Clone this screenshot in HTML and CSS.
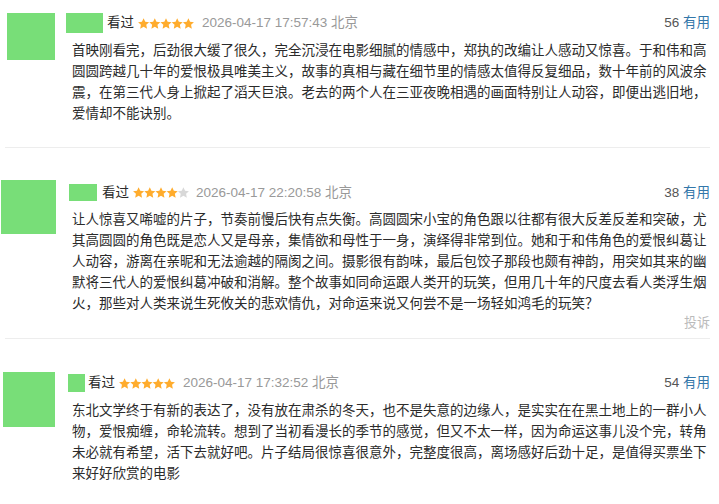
FILE: index.html
```html
<!DOCTYPE html>
<html lang="zh-CN">
<head>
<meta charset="utf-8">
<title>短评</title>
<link rel="stylesheet" href="styles.css">
</head>
<body>
<svg class="defs" width="0" height="0" aria-hidden="true">
  <defs>
    <polygon id="star" points="5.6,0.2 7.25,3.73 11.12,4.21 8.26,6.87 9.01,10.69 5.6,8.8 2.19,10.69 2.94,6.87 0.08,4.21 3.95,3.73"/>
  </defs>
</svg>
<div class="list">
  <div class="card card-a">
    <div class="avatar"></div>
    <div class="body">
      <div class="head">
        <span class="name"></span>
        <span class="watched">看过</span>
        <svg class="stars" width="56" height="11" viewBox="0 0 56 11">
          <use href="#star" x="0" class="on"/><use href="#star" x="11.2" class="on"/><use href="#star" x="22.4" class="on"/><use href="#star" x="33.6" class="on"/><use href="#star" x="44.8" class="on"/>
        </svg>
        <span class="time">2026-04-17 17:57:43 北京</span>
        <span class="votes"><span class="num">56</span> <span class="useful">有用</span></span>
      </div>
      <p class="text">首映刚看完，后劲很大缓了很久，完全沉浸在电影细腻的情感中，郑执的改编让人感动又惊喜。于和伟和高圆圆跨越几十年的爱恨极具唯美主义，故事的真相与藏在细节里的情感太值得反复细品，数十年前的风波余震，在第三代人身上掀起了滔天巨浪。老去的两个人在三亚夜晚相遇的画面特别让人动容，即便出逃旧地，爱情却不能诀别。</p>
    </div>
  </div>
  <div class="card card-b">
    <div class="avatar"></div>
    <div class="body">
      <div class="head">
        <span class="name"></span>
        <span class="watched">看过</span>
        <svg class="stars" width="56" height="11" viewBox="0 0 56 11">
          <use href="#star" x="0" class="on"/><use href="#star" x="11.2" class="on"/><use href="#star" x="22.4" class="on"/><use href="#star" x="33.6" class="on"/><use href="#star" x="44.8" class="off"/>
        </svg>
        <span class="time">2026-04-17 22:20:58 北京</span>
        <span class="votes"><span class="num">38</span> <span class="useful">有用</span></span>
      </div>
      <p class="text">让人惊喜又唏嘘的片子，节奏前慢后快有点失衡。高圆圆宋小宝的角色跟以往都有很大反差反差和突破，尤其高圆圆的角色既是恋人又是母亲，集情欲和母性于一身，演绎得非常到位。她和于和伟角色的爱恨纠葛让人动容，游离在亲昵和无法逾越的隔阂之间。摄影很有韵味，最后包饺子那段也颇有神韵，用突如其来的幽默将三代人的爱恨纠葛冲破和消解。整个故事如同命运跟人类开的玩笑，但用几十年的尺度去看人类浮生烟火，那些对人类来说生死攸关的悲欢情仇，对命运来说又何尝不是一场轻如鸿毛的玩笑？</p>
      <div class="foot"><span class="report">投诉</span></div>
    </div>
  </div>
  <div class="card card-c">
    <div class="avatar"></div>
    <div class="body">
      <div class="head">
        <span class="name"></span>
        <span class="watched">看过</span>
        <svg class="stars" width="56" height="11" viewBox="0 0 56 11">
          <use href="#star" x="0" class="on"/><use href="#star" x="11.2" class="on"/><use href="#star" x="22.4" class="on"/><use href="#star" x="33.6" class="on"/><use href="#star" x="44.8" class="on"/>
        </svg>
        <span class="time">2026-04-17 17:32:52 北京</span>
        <span class="votes"><span class="num">54</span> <span class="useful">有用</span></span>
      </div>
      <p class="text">东北文学终于有新的表达了，没有放在肃杀的冬天，也不是失意的边缘人，是实实在在黑土地上的一群小人物，爱恨痴缠，命轮流转。想到了当初看漫长的季节的感觉，但又不太一样，因为命运这事儿没个完，转角未必就有希望，活下去就好吧。片子结局很惊喜很意外，完整度很高，离场感好后劲十足，是值得买票坐下来好好欣赏的电影</p>
    </div>
  </div>
</div>
</body>
</html>
```

FILE: styles.css
```css
html, body {
  margin: 0;
  padding: 0;
  background: #ffffff;
}
body {
  width: 719px;
  height: 504px;
  overflow: hidden;
  font-family: "Liberation Sans", "Noto Sans CJK SC", sans-serif;
  font-size: 13.5px;
  color: #2b2b2b;
}
.defs {
  position: absolute;
  width: 0;
  height: 0;
}
.list {
  padding-right: 9px;
}
.card {
  display: grid;
  grid-template-columns: 61px 1fr;
  align-items: start;
  margin-left: 5px;
  border-bottom: 1px solid #ededed;
}
.avatar {
  background: #78de78;
}
.body {
  min-width: 0;
}
.head {
  display: flex;
  align-items: center;
  height: 20px;
  line-height: 20px;
  white-space: nowrap;
}
.name {
  display: block;
  background: #78de78;
}
.watched {
  color: #2b2b2b;
  margin-left: 4px;
}
.stars {
  display: block;
  margin-left: 4px;
}
.stars .on { fill: #ffac2d; }
.stars .off { fill: #d8d8d8; }
.time {
  color: #999999;
  margin-left: 8px;
}
.votes {
  margin-left: auto;
  color: #555555;
}
.useful {
  color: #3377aa;
}
.text {
  margin: 6.5px 0 0 6px;
  width: 638px;
  line-height: 21px;
  color: #2b2b2b;
}
.foot {
  display: flex;
  justify-content: flex-end;
  height: 18px;
  line-height: 18px;
}
.report {
  color: #bbbbbb;
  font-size: 13px;
}

/* card 1 */
.card-a {
  padding: 13px 0 23px;
}
.card-a .avatar {
  width: 48px;
  height: 47px;
  margin-left: 2px;
}
.card-a .name {
  width: 37px;
  height: 20px;
}

/* card 2 */
.card-b {
  padding: 35px 0 6px;
}
.card-b .avatar {
  width: 55px;
  height: 54px;
  margin: -3px 0 0 -4px;
}
.card-b .name {
  width: 28px;
  height: 17px;
  margin-left: 3px;
}
.card-b .watched { margin-left: 5px; }
.card-b .time { margin-left: 7px; }

/* card 3 */
.card-c {
  padding: 34px 0 20px;
  border-bottom: none;
}
.card-c .avatar {
  width: 52px;
  height: 55px;
  margin: -1px 0 0 -2px;
}
.card-c .name {
  width: 17px;
  height: 18px;
  margin-left: 2px;
}
.card-c .watched { margin-left: 3px; }
.card-c .time { margin-left: 8px; }
```
